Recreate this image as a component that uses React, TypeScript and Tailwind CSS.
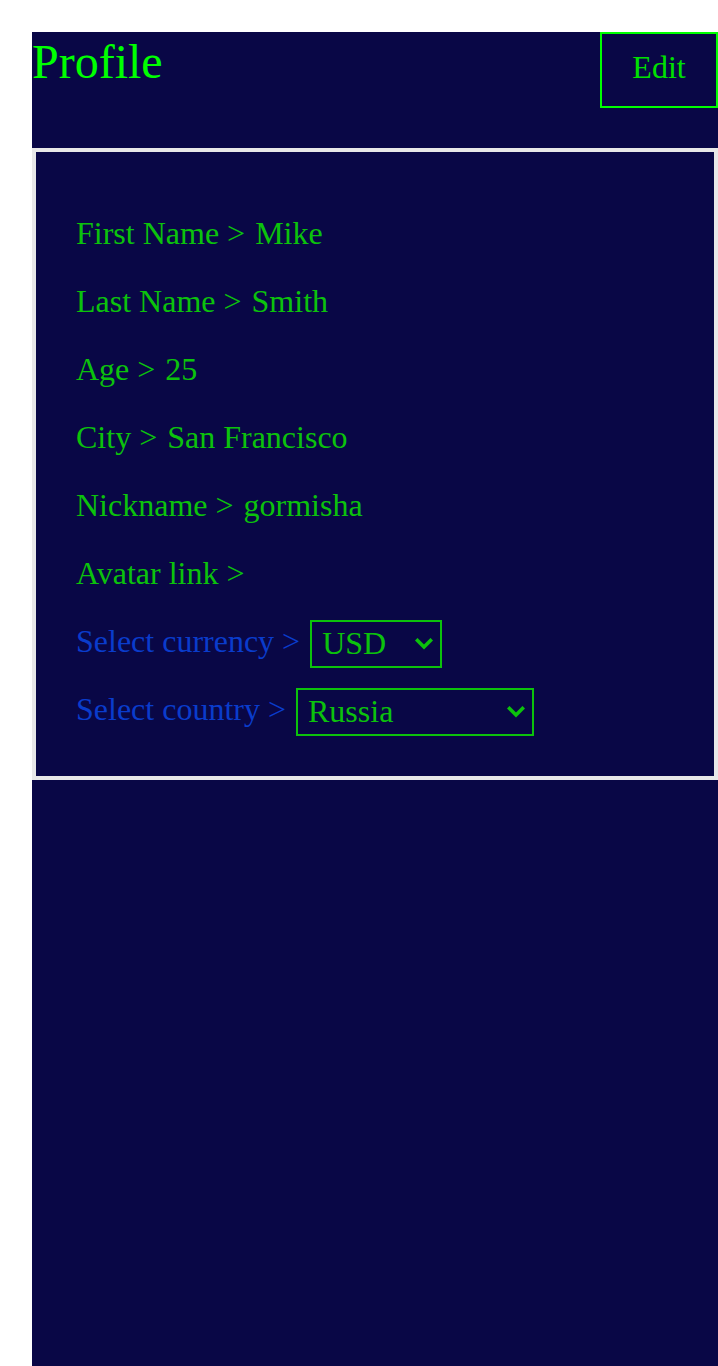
const campos = [
  { etiqueta: "First Name", valor: "Mike" },
  { etiqueta: "Last Name", valor: "Smith" },
  { etiqueta: "Age", valor: "25" },
  { etiqueta: "City", valor: "San Francisco" },
  { etiqueta: "Nickname", valor: "gormisha" },
  { etiqueta: "Avatar link", valor: "" },
];

function Flecha() {
  return (
    <svg
      className="pointer-events-none absolute right-[9px] top-1/2 -translate-y-1/2"
      width="18"
      height="12"
      viewBox="0 0 18 12"
      fill="none"
    >
      <polyline
        points="2.5,2.5 9,9 15.5,2.5"
        stroke="#0cc20c"
        strokeWidth="3.6"
        strokeLinecap="square"
      />
    </svg>
  );
}

export default function App() {
  return (
    <div className="min-h-[1366px] bg-white pl-8 pt-8 font-['Liberation_Serif',serif]">
      <div className="flex min-h-[1334px] flex-col bg-[#090746]">
        <header className="flex h-[116px] items-start justify-between">
          <h1 className="-mt-[6px] text-[48px] leading-normal text-[#00ff00]">
            Profile
          </h1>
          <button className="flex h-[76px] w-[118px] items-center justify-center border-2 border-[#00ff00] pb-[6px] text-[32px] text-[#00e000]">
            Edit
          </button>
        </header>

        <section className="border-4 border-[#e8e8e8] px-10 pb-10 pt-[63px]">
          <div className="flex flex-col gap-8">
            {campos.map((campo) => (
              <p
                key={campo.etiqueta}
                className="text-[32px] leading-[36px] text-[#0cc20c]"
              >
                {campo.etiqueta} &gt; <span className="ml-[2px]">{campo.valor}</span>
              </p>
            ))}
          </div>

          <div className="mt-[29px] flex flex-col gap-5">
            <label className="flex h-12 items-center text-[32px] leading-[36px] text-[#0a3ccc]">
              <span className="mr-[10px] -mt-[6px]">Select currency &gt;</span>
              <div className="relative">
                <select
                  defaultValue="USD"
                  className="block h-12 w-[132px] appearance-none border-2 border-[#0cc20c] bg-transparent pb-[2px] pl-[10px] text-[32px] leading-[36px] text-[#0cc20c] outline-none"
                >
                  <option value="RUB">RUB</option>
                  <option value="EUR">EUR</option>
                  <option value="USD">USD</option>
                </select>
                <Flecha />
              </div>
            </label>
            <label className="flex h-12 items-center text-[32px] leading-[36px] text-[#0a3ccc]">
              <span className="mr-[10px] -mt-[6px]">Select country &gt;</span>
              <div className="relative">
                <select
                  defaultValue="Russia"
                  className="block h-12 w-[238px] appearance-none border-2 border-[#0cc20c] bg-transparent pb-[2px] pl-[10px] text-[32px] leading-[36px] text-[#0cc20c] outline-none"
                >
                  <option value="Armenia">Armenia</option>
                  <option value="Russia">Russia</option>
                  <option value="Belarus">Belarus</option>
                  <option value="Kazakhstan">Kazakhstan</option>
                  <option value="Ukraine">Ukraine</option>
                </select>
                <Flecha />
              </div>
            </label>
          </div>
        </section>
      </div>
    </div>
  );
}
